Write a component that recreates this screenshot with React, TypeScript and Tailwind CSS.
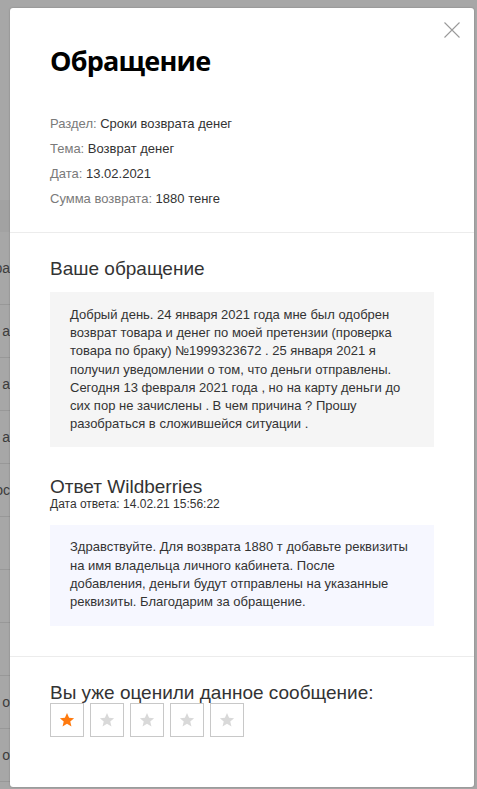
import React from "react";

const Star = ({ active }: { active: boolean }) => (
  <svg width="16" height="16" viewBox="0 0 24 24">
    <path
      d="M12 1.5l3.1 7.1 7.6.6-5.8 5 1.8 7.5L12 17.8l-6.7 3.9 1.8-7.5-5.8-5 7.6-.6z"
      fill={active ? "#ff7a0f" : "#d9d9d9"}
    />
  </svg>
);

const rows = ["ра", "а", "а", "а", "ос", "", "", "", "о", "о"];

export default function App() {
  return (
    <div
      className="relative h-[789px] w-[477px] overflow-hidden bg-[#a7a7a7]"
      style={{ fontFamily: '"Liberation Sans", Arial, sans-serif' }}
    >
      {/* underlying page (dimmed) */}
      <div className="flex flex-col w-[10px] overflow-hidden">
        <div className="h-[200px]" />
        <div className="h-[32px] bg-[#a2a2a2]" />
        {rows.map((t, i) => (
          <div
            key={i}
            className={`flex items-center justify-end border-b border-[#989898] text-[14px] text-[#3c3c3c] whitespace-nowrap ${i === 0 ? "h-[73px]" : "h-[53px]"}`}
          >
            {t}
          </div>
        ))}
      </div>

      {/* modal */}
      <div className="absolute left-[10px] top-[8px] w-[464px] h-[779px] rounded-[3px] bg-white shadow-[0_0_2px_rgba(0,0,0,0.25)]">
        <button className="absolute right-[14px] top-[14px] h-[16px] w-[16px]">
          <svg width="16" height="16" viewBox="0 0 16 16">
            <path d="M0.5 0.5L15.5 15.5M15.5 0.5L0.5 15.5" stroke="#9a9a9a" strokeWidth="1.1" fill="none" />
          </svg>
        </button>

        <div className="px-[40px] pt-[35px] pb-[21px] border-b border-[#ececec]">
          <h1
            className="text-[27px] leading-[36px] font-bold tracking-[-0.8px] text-black"
            style={{ fontFamily: '"Open Sans", "Noto Sans", sans-serif' }}
          >
            Обращение
          </h1>
          <div className="mt-[32px] flex flex-col text-[13px] leading-[25px]">
            <div><span className="text-[#7a7a7a]">Раздел: </span><span className="text-[#333]">Сроки возврата денег</span></div>
            <div><span className="text-[#7a7a7a]">Тема: </span><span className="text-[#333]">Возврат денег</span></div>
            <div><span className="text-[#7a7a7a]">Дата: </span><span className="text-[#333]">13.02.2021</span></div>
            <div><span className="text-[#7a7a7a]">Сумма возврата: </span><span className="text-[#333]">1880 тенге</span></div>
          </div>
        </div>

        <div className="px-[40px] pt-[24px] pb-[30px] border-b border-[#ececec]">
          <h2 className="text-[19px] leading-[24px] text-[#333]">Ваше обращение</h2>
          <div className="mt-[11px] bg-[#f5f5f5] pl-[20px] pr-[20px] pt-[14px] pb-[14px] text-[13px] leading-[18.2px] text-[#333]">
            Добрый день. 24 января 2021 года мне был одобрен возврат товара и денег по моей претензии (проверка товара по браку) №1999323672 . 25 января 2021 я получил уведомлении о том, что деньги отправлены. Сегодня 13 февраля 2021 года , но на карту деньги до сих пор не зачислены . В чем причина ? Прошу разобраться в сложившейся ситуации .
          </div>

          <h2 className="mt-[30px] text-[19px] leading-[20px] text-[#333]">Ответ Wildberries</h2>
          <div className="text-[12px] leading-[14px] text-[#333]">Дата ответа: 14.02.21 15:56:22</div>
          <div className="mt-[14px] bg-[#f6f7ff] pl-[20px] pr-[24px] pt-[13px] pb-[14px] text-[13px] leading-[18.3px] text-[#333]">
            Здравствуйте. Для возврата 1880 т добавьте реквизиты на имя владельца личного кабинета. После добавления, деньги будут отправлены на указанные реквизиты. Благодарим за обращение.
          </div>
        </div>

        <div className="px-[40px] pt-[26px]">
          <div className="text-[19px] leading-[20px] text-[#333]">Вы уже оценили данное сообщение:</div>
          <div className="flex gap-[6px]">
            {[0, 1, 2, 3, 4].map((i) => (
              <div key={i} className="flex h-[34px] w-[34px] items-center justify-center border border-[#c8c8c8]">
                <Star active={i === 0} />
              </div>
            ))}
          </div>
        </div>
      </div>
    </div>
  );
}
